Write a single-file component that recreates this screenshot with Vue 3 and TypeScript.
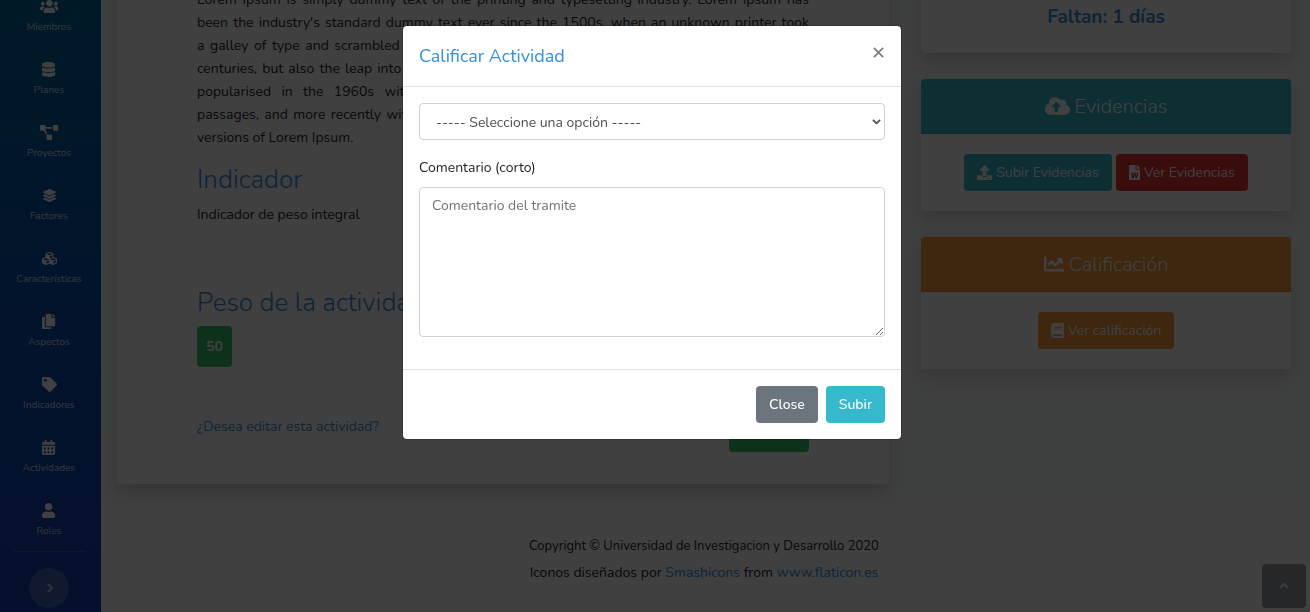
<script setup lang="ts">
import { ref } from 'vue'

interface Icon {
  w: number
  d: string
}

const icons: Record<string, Icon> = {
  users: { w: 640, d: 'M96 224c35.3 0 64-28.7 64-64s-28.7-64-64-64-64 28.7-64 64 28.7 64 64 64zm448 0c35.3 0 64-28.7 64-64s-28.7-64-64-64-64 28.7-64 64 28.7 64 64 64zm32 32h-64c-17.6 0-33.5 7.1-45.1 18.6 40.3 22.1 68.9 62 75.1 109.4h66c17.7 0 32-14.3 32-32v-32c0-35.3-28.7-64-64-64zm-256 0c61.9 0 112-50.1 112-112S381.9 32 320 32 208 82.1 208 144s50.1 112 112 112zm76.8 32h-8.3c-20.8 10-43.9 16-68.5 16s-47.6-6-68.5-16h-8.3C179.6 288 128 339.6 128 403.2V432c0 26.5 21.5 48 48 48h288c26.5 0 48-21.5 48-48v-28.8c0-63.6-51.6-115.2-115.2-115.2zm-223.7-13.4C161.5 263.1 145.6 256 128 256H64c-35.3 0-64 28.7-64 64v32c0 17.7 14.3 32 32 32h65.9c6.3-47.4 34.9-87.3 75.2-109.4z' },
  database: { w: 448, d: 'M448 73.143v45.714C448 159.143 347.667 192 224 192S0 159.143 0 118.857V73.143C0 32.857 100.333 0 224 0s224 32.857 224 73.143zM448 176v102.857C448 319.143 347.667 352 224 352S0 319.143 0 278.857V176c48.125 33.143 136.208 48.572 224 48.572S399.874 209.143 448 176zm0 160v102.857C448 479.143 347.667 512 224 512S0 479.143 0 438.857V336c48.125 33.143 136.208 48.572 224 48.572S399.874 369.143 448 336z' },
  diagram: { w: 640, d: 'M384 320H256c-17.67 0-32 14.33-32 32v128c0 17.67 14.33 32 32 32h128c17.67 0 32-14.33 32-32V352c0-17.67-14.33-32-32-32zM192 32c0-17.67-14.33-32-32-32H32C14.33 0 0 14.33 0 32v128c0 17.67 14.33 32 32 32h95.72l73.16 128.04C211.98 300.98 232.4 288 256 288h.28L192 175.51V128h224V64H192V32zM608 0H480c-17.67 0-32 14.33-32 32v128c0 17.67 14.33 32 32 32h128c17.67 0 32-14.33 32-32V32c0-17.67-14.33-32-32-32z' },
  layers: { w: 512, d: 'M12.41 148.02l232.94 105.67c6.8 3.09 14.49 3.09 21.29 0l232.94-105.67c16.55-7.51 16.55-32.52 0-40.03L266.65 2.31a25.607 25.607 0 0 0-21.29 0L12.41 107.98c-16.55 7.51-16.55 32.53 0 40.04zm487.18 88.28l-58.09-26.33-161.64 73.27c-7.56 3.43-15.59 5.17-23.86 5.17s-16.29-1.74-23.86-5.17L70.51 209.97l-58.1 26.33c-16.55 7.5-16.55 32.5 0 40l232.94 105.59c6.8 3.08 14.49 3.08 21.29 0L499.59 276.3c16.55-7.5 16.55-32.5 0-40zm0 127.8l-57.87-26.23-161.86 73.37c-7.56 3.43-15.59 5.17-23.86 5.17s-16.29-1.74-23.86-5.17L70.29 337.87 12.41 364.1c-16.55 7.5-16.55 32.5 0 40l232.94 105.59c6.8 3.08 14.49 3.08 21.29 0L499.59 404.1c16.55-7.5 16.55-32.5 0-40z' },
  cubes: { w: 512, d: 'M488.6 250.2L392 214V105.5c0-15-9.3-28.4-23.4-33.7l-100-37.5c-8.1-3.1-17.1-3.1-25.3 0l-100 37.5c-14.1 5.3-23.4 18.7-23.4 33.7V214l-96.6 36.2C9.3 255.5 0 268.9 0 283.9V394c0 13.6 7.7 26.1 19.9 32.2l100 50c10.1 5.1 22.1 5.1 32.2 0l103.9-52 103.9 52c10.1 5.1 22.1 5.1 32.2 0l100-50c12.2-6.1 19.9-18.6 19.9-32.2V283.9c0-15-9.3-28.4-23.4-33.7zM358 214.8l-85 31.9v-68.2l85-37v73.3zM154 104.1l102-38.2 102 38.2v.6l-102 41.4-102-41.4v-.6zm84 291.1l-85 42.5v-79.1l85-38.8v75.4zm0-112l-102 41.4-102-41.4v-.6l102-38.2 102 38.2v.6zm240 112l-85 42.5v-79.1l85-38.8v75.4zm0-112l-102 41.4-102-41.4v-.6l102-38.2 102 38.2v.6z' },
  copy: { w: 448, d: 'M320 448v40c0 13.255-10.745 24-24 24H24c-13.255 0-24-10.745-24-24V120c0-13.255 10.745-24 24-24h72v296c0 30.879 25.121 56 56 56h168zm0-344V0H152c-13.255 0-24 10.745-24 24v368c0 13.255 10.745 24 24 24h272c13.255 0 24-10.745 24-24V128H344c-13.2 0-24-10.8-24-24zm120.971-31.029L375.029 7.029A24 24 0 0 0 358.059 0H352v96h96v-6.059a24 24 0 0 0-7.029-16.97z' },
  tag: { w: 512, d: 'M0 252.118V48C0 21.49 21.49 0 48 0h204.118a48 48 0 0 1 33.941 14.059l211.882 211.882c18.745 18.745 18.745 49.137 0 67.882L293.823 497.941c-18.745 18.745-49.137 18.745-67.882 0L14.059 286.059A48 48 0 0 1 0 252.118zM112 64c-26.51 0-48 21.49-48 48s21.49 48 48 48 48-21.49 48-48-21.49-48-48-48z' },
  calendar: { w: 448, d: 'M0 192h448v272c0 26.5-21.5 48-48 48H48c-26.5 0-48-21.5-48-48zM64 256v64h64v-64zM192 256v64h64v-64zM320 256v64h64v-64zM64 384v64h64v-64zM192 384v64h64v-64zM320 384v64h64v-64zM448 160v-48c0-26.5-21.5-48-48-48h-48V12c0-6.600-5.400-12-12-12h-40c-6.600 0-12 5.400-12 12v52H160V12c0-6.600-5.400-12-12-12h-40c-6.600 0-12 5.400-12 12v52H48C21.500 64 0 85.500 0 112v48z' },
  user: { w: 448, d: 'M224 256c70.7 0 128-57.3 128-128S294.7 0 224 0 96 57.3 96 128s57.3 128 128 128zm89.6 32h-16.7c-22.2 10.2-46.9 16-72.9 16s-50.6-5.8-72.9-16h-16.7C60.2 288 0 348.2 0 422.4V464c0 26.5 21.5 48 48 48h352c26.5 0 48-21.5 48-48v-41.6c0-74.2-60.2-134.4-134.4-134.4z' },
  cloud: { w: 640, d: 'M537.6 226.6c4.1-10.7 6.4-22.4 6.4-34.6 0-53-43-96-96-96-19.7 0-38.1 6-53.3 16.2C367 64.2 315.3 32 256 32c-88.4 0-160 71.6-160 160 0 2.7.1 5.4.2 8.1C40.2 219.8 0 273.2 0 336c0 79.5 64.5 144 144 144h368c70.7 0 128-57.3 128-128 0-61.9-44-113.6-102.4-125.400zM393.4 288H328v112c0 8.8-7.2 16-16 16h-48c-8.8 0-16-7.2-16-16V288h-65.4c-14.3 0-21.4-17.2-11.3-27.3l105.4-105.4c6.2-6.2 16.4-6.2 22.6 0l105.4 105.4c10.1 10.1 2.9 27.3-11.3 27.3z' },
  upload: { w: 512, d: 'M296 384h-80c-13.3 0-24-10.7-24-24V192h-87.7c-17.8 0-26.7-21.5-14.1-34.1L242.3 5.7c7.5-7.5 19.8-7.5 27.3 0l152.2 152.2c12.6 12.6 3.7 34.1-14.1 34.1H320v168c0 13.3-10.7 24-24 24zm216-8v112c0 13.3-10.7 24-24 24H24c-13.3 0-24-10.7-24-24V376c0-13.3 10.7-24 24-24h136v8c0 30.9 25.1 56 56 56h80c30.9 0 56-25.1 56-56v-8h136c13.3 0 24 10.7 24 24zm-124 88c0-11-9-20-20-20s-20 9-20 20 9 20 20 20 20-9 20-20zm64 0c0-11-9-20-20-20s-20 9-20 20 9 20 20 20 20-9 20-20z' },
  word: { w: 384, d: 'M224 136V0H24C10.7 0 0 10.7 0 24v464c0 13.3 10.7 24 24 24h336c13.3 0 24-10.7 24-24V160H248c-13.2 0-24-10.8-24-24zm57.1 120H305c7.7 0 13.4 7.1 11.7 14.7l-38 168c-1.2 5.5-6.1 9.3-11.7 9.3h-38c-5.5 0-10.3-3.8-11.6-9.1-25.8-103.5-20.8-81.2-25.6-110.5h-.5c-1.1 14.3-2.4 17.4-25.6 110.5-1.3 5.3-6.1 9.1-11.6 9.1H117c-5.6 0-10.5-3.9-11.7-9.4l-37.8-168c-1.7-7.5 4-14.6 11.7-14.6h24.5c5.7 0 10.7 4 11.8 9.7 15.6 78 20.1 109.5 21 122.2 1.6-10.2 7.3-32.7 29.4-122.7 1.3-5.4 6.1-9.1 11.7-9.1h29.1c5.6 0 10.4 3.8 11.7 9.2 24 100.4 28.8 124 29.6 129.4-.2-11.2-2.6-17.8 21.6-129.2 1-5.6 5.9-9.5 11.5-9.5zM384 121.9v6.1H256V0h6.1c6.4 0 12.5 2.5 17 7l97.9 98c4.5 4.5 7 10.6 7 16.9z' },
  chart: { w: 512, d: 'M496 384H64V80c0-8.84-7.16-16-16-16H16C7.16 64 0 71.16 0 80v336c0 17.67 14.33 32 32 32h464c8.84 0 16-7.16 16-16v-32c0-8.84-7.16-16-16-16zM464 96H345.94c-21.38 0-32.09 25.85-16.97 40.97l32.4 32.4L288 242.75l-73.37-73.37c-12.5-12.5-32.76-12.5-45.25 0l-68.69 68.69c-6.25 6.25-6.25 16.38 0 22.63l22.62 22.62c6.25 6.25 16.38 6.25 22.63 0L192 237.25l73.37 73.37c12.5 12.5 32.76 12.5 45.25 0l96-96 32.4 32.4c15.12 15.12 40.97 4.41 40.97-16.97V112c.01-8.84-7.15-16-15.99-16z' },
  book: { w: 448, d: 'M448 360V24c0-13.3-10.7-24-24-24H96C43 0 0 43 0 96v320c0 53 43 96 96 96h328c13.3 0 24-10.7 24-24v-16c0-7.5-3.5-14.3-8.9-18.7-4.2-15.4-4.2-59.3 0-74.7 5.4-4.3 8.9-11.1 8.9-18.6zM128 134c0-3.3 2.7-6 6-6h212c3.3 0 6 2.7 6 6v20c0 3.3-2.7 6-6 6H134c-3.3 0-6-2.7-6-6v-20zm0 64c0-3.3 2.7-6 6-6h212c3.3 0 6 2.7 6 6v20c0 3.3-2.7 6-6 6H134c-3.3 0-6-2.7-6-6v-20zm253.4 250H96c-17.7 0-32-14.3-32-32 0-17.6 14.4-32 32-32h285.4c-1.9 17.1-1.9 46.9 0 64z' },
}

const viewBox = (name: string): string => `0 0 ${icons[name].w} 512`

const navItems: { label: string; icon: string }[] = [
  { label: 'Miembros', icon: 'users' },
  { label: 'Planes', icon: 'database' },
  { label: 'Proyectos', icon: 'diagram' },
  { label: 'Factores', icon: 'layers' },
  { label: 'Características', icon: 'cubes' },
  { label: 'Aspectos', icon: 'copy' },
  { label: 'Indicadores', icon: 'tag' },
  { label: 'Actividades', icon: 'calendar' },
  { label: 'Roles', icon: 'user' },
]

const description: string[] = [
  'Lorem Ipsum is simply dummy text of the printing and typesetting industry. Lorem Ipsum has',
  "been the industry's standard dummy text ever since the 1500s, when an unknown printer took",
  'a galley of type and scrambled it to make a type specimen book. It has survived not only five',
  'centuries, but also the leap into electronic typesetting, remaining essentially unchanged. It was',
  'popularised in the 1960s with the release of Letraset sheets containing Lorem Ipsum',
  'passages, and more recently with desktop publishing software like Aldus PageMaker including',
  'versions of Lorem Ipsum.',
]

const option = ref('')
const comment = ref('')
const open = ref(true)
</script>

<template>
  <div class="page">
    <nav class="sidebar">
      <a v-for="item in navItems" :key="item.label" class="nav-item" href="#">
        <svg class="nav-icon" :class="item.icon" :viewBox="viewBox(item.icon)" aria-hidden="true">
          <path fill-rule="evenodd" :d="icons[item.icon].d" />
        </svg>
        <span>{{ item.label }}</span>
      </a>
      <hr class="divider" />
      <button class="toggle" type="button" aria-label="Expandir menú">
        <svg viewBox="0 0 10 10" aria-hidden="true"><path d="M4 1l4 4-4 4" /></svg>
      </button>
    </nav>

    <div class="wrapper">
      <main class="content">
        <div class="column">
          <article class="card activity">
            <p class="lorem">
              <span v-for="line in description" :key="line">{{ line }}</span>
            </p>
            <h2 class="first">Indicador</h2>
            <p class="indicator">Indicador de peso integral</p>
            <h2 class="second">Peso de la actividad</h2>
            <strong class="weight">50</strong>
            <div class="edit-row">
              <a href="#">¿Desea editar esta actividad?</a>
              <button class="btn success" type="button" aria-label="Editar"></button>
            </div>
          </article>
        </div>

        <aside class="column side">
          <section class="card remaining"><h3>Faltan: 1 días</h3></section>
          <section class="card">
            <h4 class="card-header info">
              <svg :viewBox="viewBox('cloud')" aria-hidden="true"><path :d="icons.cloud.d" /></svg>
              Evidencias
            </h4>
            <div class="card-body">
              <button class="btn info" type="button">
                <svg :viewBox="viewBox('upload')" aria-hidden="true"><path :d="icons.upload.d" /></svg>
                Subir Evidencias
              </button>
              <button class="btn danger" type="button">
                <svg :viewBox="viewBox('word')" aria-hidden="true"><path :d="icons.word.d" /></svg>
                Ver Evidencias
              </button>
            </div>
          </section>
          <section class="card">
            <h4 class="card-header warning">
              <svg :viewBox="viewBox('chart')" aria-hidden="true"><path :d="icons.chart.d" /></svg>
              Calificación
            </h4>
            <div class="card-body">
              <button class="btn warning" type="button">
                <svg :viewBox="viewBox('book')" aria-hidden="true"><path :d="icons.book.d" /></svg>
                Ver calificación
              </button>
            </div>
          </section>
        </aside>
      </main>

      <footer class="footer">
        <p class="copyright">Copyright © Universidad de Investigacion y Desarrollo 2020</p>
        <p>Iconos diseñados por <a href="#">Smashicons</a> from <a href="#">www.flaticon.es</a></p>
      </footer>
    </div>

    <a class="scroll-top" href="#" aria-label="Volver arriba">
      <svg viewBox="0 0 10 10" aria-hidden="true"><path d="M1 7l4-4 4 4" /></svg>
    </a>

    <div v-if="open" class="backdrop">
      <form class="modal" role="dialog" aria-modal="true" aria-labelledby="modal-title" @submit.prevent>
        <header class="modal-header">
          <h5 id="modal-title">Calificar Actividad</h5>
          <button class="close" type="button" aria-label="Cerrar" @click="open = false">
            <svg viewBox="0 0 12 12" aria-hidden="true"><path d="M1 1l10 10M11 1L1 11" /></svg>
          </button>
        </header>
        <div class="modal-body">
          <div class="select-box">
            <select v-model="option" class="control" aria-label="Calificación">
              <option value="">----- Seleccione una opción -----</option>
            </select>
            <svg viewBox="0 0 10 6" aria-hidden="true"><path d="M1 1l4 4 4-4" /></svg>
          </div>
          <label for="comment">Comentario (corto)</label>
          <textarea id="comment" v-model="comment" class="control" placeholder="Comentario del tramite"></textarea>
        </div>
        <footer class="modal-footer">
          <button class="btn secondary" type="button" @click="open = false">Close</button>
          <button class="btn info" type="submit">Subir</button>
        </footer>
      </form>
    </div>
  </div>
</template>

<style>
body {
  margin: 0;
}
</style>

<style scoped>
.page,
.page * {
  box-sizing: border-box;
}
.page {
  display: flex;
  height: 100vh;
  overflow: hidden;
  background: #fff;
  color: #212529;
  font-family: Nunito, "Open Sans", "Noto Sans", sans-serif;
  font-size: 14px;
  line-height: 23px;
}
p, h2, h3, h4, h5 {
  margin: 0;
}
a {
  color: #3490dc;
  text-decoration: none;
}
button, select, textarea {
  font: inherit;
}
svg {
  fill: currentColor;
}

.sidebar {
  display: flex;
  flex: none;
  flex-direction: column;
  align-items: center;
  width: 101px;
  padding-right: 3px;
  background: linear-gradient(180deg, #00649a 0%, #045ca6 20%, #0c4cac 55%, #143cb0 100%);
}
.nav-item {
  display: flex;
  flex: none;
  flex-direction: column;
  align-items: center;
  gap: 5px;
  width: 100%;
  height: 63px;
  padding-top: 15px;
  color: rgba(255, 255, 255, 0.8);
  font-size: 10px;
  line-height: 16px;
}
.nav-item:first-child {
  margin-top: -16px;
}
.nav-icon {
  height: 15px;
  color: #fff;
}
.nav-icon.layers {
  height: 13px;
  margin: 1px 0;
}
.divider {
  flex: none;
  width: 72px;
  height: 1px;
  margin: 0 0 16px;
  border: 0;
  background: rgba(255, 255, 255, 0.15);
}
.toggle {
  display: flex;
  flex: none;
  align-items: center;
  justify-content: center;
  width: 40px;
  height: 40px;
  padding: 0;
  border: 0;
  border-radius: 50%;
  background: rgba(255, 255, 255, 0.2);
  color: rgba(255, 255, 255, 0.6);
}
.toggle svg,
.scroll-top svg {
  width: 10px;
  height: 10px;
  fill: none;
  stroke: currentColor;
  stroke-width: 2.4;
}

.wrapper {
  flex: 1;
  min-width: 0;
  padding-right: 3px;
}
.content {
  display: grid;
  grid-template-columns: minmax(0, 2fr) minmax(0, 1fr);
  align-items: start;
  margin: -48px -3px 0 0;
  padding: 0 3px 24px 0;
  background: #f8fafc;
}
.column {
  padding: 0 16px;
}
.side {
  display: grid;
  gap: 26px;
}
.card {
  border-radius: 4px;
  background: #fff;
  box-shadow: 0 8px 16px rgba(0, 0, 0, 0.15);
}
.activity {
  padding: 36px 80px 32px;
}
.lorem span {
  display: block;
  text-align: justify;
  text-align-last: justify;
  white-space: nowrap;
}
.lorem span:last-child {
  text-align-last: left;
}
h2 {
  color: #3490dc;
  font-size: 26px;
  font-weight: 300;
  line-height: 31px;
}
.first {
  margin-top: 15px;
}
.indicator {
  margin-top: 8px;
}
.second {
  margin-top: 61px;
}
.weight {
  display: block;
  width: fit-content;
  margin-top: 8px;
  padding: 9px;
  border-radius: 4px;
  background: #38c172;
  color: #fff;
}
.edit-row {
  display: flex;
  align-items: flex-start;
  justify-content: space-between;
  margin-top: 48px;
}
.edit-row .btn {
  width: 80px;
}
.remaining {
  padding: 50px 20px 20px;
  text-align: center;
}
.remaining h3 {
  color: #3490dc;
  font-size: 19px;
  font-weight: 700;
  line-height: 31px;
}
.card-header {
  display: flex;
  align-items: center;
  justify-content: center;
  gap: 5px;
  height: 55px;
  border-bottom: 1px solid rgba(0, 0, 0, 0.13);
  border-radius: 4px 4px 0 0;
  font-size: 20px;
  font-weight: 300;
}
.card-header svg {
  height: 20px;
}
.card-body {
  display: flex;
  flex-wrap: wrap;
  justify-content: center;
  gap: 4px;
  padding: 20px;
}
.btn {
  display: inline-flex;
  align-items: center;
  justify-content: center;
  gap: 4px;
  height: 37px;
  padding: 0 13px;
  border: 0;
  border-radius: 4px;
  color: #fff;
}
.btn svg {
  height: 15px;
}
.info {
  background: #36b9cc;
  color: #fff;
}
.danger {
  background: #e3342f;
}
.warning {
  background: #f6993f;
  color: #fff;
}
.success {
  background: #38c172;
}
.secondary {
  background: #6c757d;
}

.footer {
  padding-top: 27px;
  text-align: center;
}
.footer p + p {
  margin-top: 3px;
}
.copyright {
  font-size: 13px;
}
.scroll-top {
  position: fixed;
  right: 4px;
  bottom: 4px;
  display: flex;
  align-items: center;
  justify-content: center;
  width: 44px;
  height: 44px;
  border-radius: 4px;
  background: #989ca0;
  color: #e8e8e8;
}

.backdrop {
  position: fixed;
  inset: 0;
  padding: 25px 6px 25px 0;
  background: rgba(0, 0, 0, 0.75);
}
.modal {
  max-width: 500px;
  margin: 0 auto;
  border: 1px solid rgba(0, 0, 0, 0.2);
  border-radius: 5px;
  background: #fff;
  background-clip: padding-box;
}
.modal-header {
  display: flex;
  align-items: flex-start;
  justify-content: space-between;
  padding: 16px;
  border-bottom: 1px solid #dee2e6;
}
.modal-header h5 {
  color: #3490dc;
  font-size: 18px;
  font-weight: 400;
  line-height: 28px;
}
.close {
  display: flex;
  padding: 5px 1px;
  border: 0;
  background: none;
  color: #808080;
}
.close svg {
  width: 11px;
  height: 11px;
  fill: none;
  stroke: currentColor;
  stroke-width: 2;
}
.modal-body {
  display: flex;
  flex-direction: column;
  padding: 16px 16px 32px;
}
.control {
  width: 100%;
  border: 1px solid #ced4da;
  border-radius: 4px;
  background: #fff;
  color: #495057;
}
.select-box {
  display: grid;
  align-items: center;
}
.select-box > * {
  grid-area: 1 / 1;
}
.select-box svg {
  justify-self: end;
  width: 9px;
  margin-right: 4px;
  fill: none;
  stroke: #555;
  stroke-width: 2;
  pointer-events: none;
}
select.control {
  height: 37px;
  padding: 2px 16px 0;
  appearance: none;
}
label {
  margin: 16px 0 8px;
}
textarea.control {
  height: 150px;
  padding: 6px 12px;
  resize: vertical;
}
textarea::placeholder {
  color: #6c757d;
}
.modal-footer {
  display: flex;
  justify-content: flex-end;
  gap: 8px;
  padding: 16px;
  border-top: 1px solid #dee2e6;
}
.modal-footer .btn {
  font-weight: 500;
}
</style>
